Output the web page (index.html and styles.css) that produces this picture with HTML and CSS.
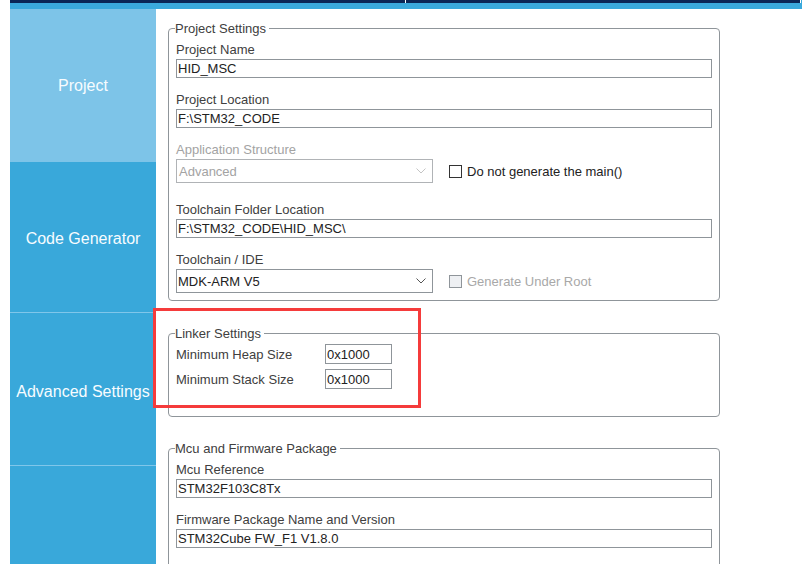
FILE: index.html
```html
<!DOCTYPE html>
<html lang="en">
<head>
<meta charset="utf-8">
<title>Project Manager</title>
<link rel="stylesheet" href="styles.css">
</head>
<body>
<div class="topbar">
  <div class="tabs"><div class="tab tab-1"></div><div class="tab tab-2"></div></div>
  <div class="band"></div>
</div>
<div class="layout">
  <nav class="sidebar">
    <div class="nav-item active">Project</div>
    <div class="nav-item code">Code Generator</div>
    <div class="nav-item sep adv">Advanced Settings</div>
    <div class="nav-item sep rest"></div>
  </nav>
  <main class="main">
    <fieldset class="group">
      <legend>Project Settings</legend>
      <div class="fields">
        <div class="field">
          <div class="label">Project Name</div>
          <input class="text" type="text" value="HID_MSC">
        </div>
        <div class="field">
          <div class="label">Project Location</div>
          <input class="text" type="text" value="F:\STM32_CODE">
        </div>
        <div class="field">
          <div class="label disabled">Application Structure</div>
          <div class="select-row">
            <div class="select is-disabled"><span>Advanced</span>
              <svg class="chev" width="10" height="6" viewBox="0 0 10 6"><polyline points="0.5,0.5 5,5 9.5,0.5" fill="none" stroke="#c4c4c4" stroke-width="1"/></svg>
            </div>
            <label class="check"><span class="box"></span><span>Do not generate the main()</span></label>
          </div>
        </div>
        <div class="field">
          <div class="label">Toolchain Folder Location</div>
          <input class="text" type="text" value="F:\STM32_CODE\HID_MSC\">
        </div>
        <div class="field">
          <div class="label">Toolchain / IDE</div>
          <div class="select-row">
            <div class="select"><span>MDK-ARM V5</span>
              <svg class="chev" width="10" height="6" viewBox="0 0 10 6"><polyline points="0.5,0.5 5,5 9.5,0.5" fill="none" stroke="#555" stroke-width="1"/></svg>
            </div>
            <label class="check is-disabled"><span class="box"></span><span>Generate Under Root</span></label>
          </div>
        </div>
      </div>
    </fieldset>

    <fieldset class="group linker">
      <legend>Linker Settings</legend>
      <div class="grid">
        <div class="label">Minimum Heap Size</div>
        <input class="text small" type="text" value="0x1000">
        <div class="label">Minimum Stack Size</div>
        <input class="text small" type="text" value="0x1000">
      </div>
    </fieldset>

    <fieldset class="group mcu">
      <legend>Mcu and Firmware Package</legend>
      <div class="fields">
        <div class="field">
          <div class="label">Mcu Reference</div>
          <input class="text" type="text" value="STM32F103C8Tx">
        </div>
        <div class="field">
          <div class="label">Firmware Package Name and Version</div>
          <input class="text" type="text" value="STM32Cube FW_F1 V1.8.0">
        </div>
      </div>
    </fieldset>
  </main>
  <div class="highlight"></div>
</div>
</body>
</html>
```

FILE: styles.css
```css
* { box-sizing: border-box; }

html, body {
  margin: 0;
  padding: 0;
  background: #ffffff;
  height: 564px;
  overflow: hidden;
  font-family: "Liberation Sans", Arial, sans-serif;
  font-size: 13px;
  color: #404040;
}

.topbar {
  margin-left: 10px;
}
.tabs {
  display: flex;
  height: 3px;
  background: #3aa9dc;
}
.tab {
  background: #0a2656;
  border-right: 1px solid #ffffff;
}
.tab-1 { width: 396px; }
.tab-2 { width: 395px; }
.band {
  height: 6px;
  background: #3aa9dc;
}

.layout {
  position: relative;
  display: flex;
  margin-left: 10px;
  height: 555px;
}

.sidebar {
  width: 146px;
  flex: none;
  display: flex;
  flex-direction: column;
}
.nav-item {
  display: flex;
  align-items: center;
  justify-content: center;
  height: 150px;
  background: #39a8da;
  color: #f7fcff;
  font-size: 16px;
}
.nav-item.active {
  height: 153px;
  background: #7dc4e8;
}
.nav-item.code {
  padding-top: 4px;
}
.nav-item.sep {
  border-top: 1px solid #80c6ea;
}
.nav-item.adv {
  height: 153px;
  padding-top: 5px;
}
.nav-item.rest {
  flex: 1;
}

.main {
  flex: none;
  padding: 11px 0 0 12px;
}

.group {
  margin: 0;
  width: 552px;
  min-width: 0;
  border: 1px solid #8f959a;
  border-radius: 4px;
  padding: 0 7px 2px 7px;
}
.group legend {
  padding: 1px 3px 0 0;
  margin-left: -1px;
  line-height: 16px;
  font-size: 13px;
  color: #404040;
}

.fields {
  display: flex;
  flex-direction: column;
  gap: 13px;
  padding-top: 4px;
}
.field {
  display: flex;
  flex-direction: column;
}
.label {
  line-height: 16px;
  height: 16px;
  padding-top: 1px;
  margin-bottom: 2px;
  color: #404040;
  white-space: nowrap;
}
.label.disabled {
  color: #a3a3a3;
}

.text {
  display: block;
  width: 536px;
  height: 19px;
  margin: 0;
  border: 1px solid #8f959a;
  border-radius: 0;
  padding: 0 1px;
  font-family: "Liberation Sans", Arial, sans-serif;
  font-size: 13px;
  color: #222222;
  background: #ffffff;
  outline: none;
}

.select-row {
  display: flex;
  align-items: flex-start;
  min-height: 29px;
}
.select {
  width: 257px;
  height: 24px;
  border: 1px solid #8f959a;
  display: flex;
  align-items: center;
  justify-content: space-between;
  padding: 0 6px 0 1px;
  color: #222222;
  background: #ffffff;
}
.select.is-disabled {
  border-color: #b0b3b6;
  color: #a3a3a3;
  padding-left: 2px;
}
.chev { display: block; }

.check {
  display: flex;
  align-items: center;
  gap: 5px;
  height: 24px;
  margin-left: 16px;
  color: #222222;
}
.check .box {
  width: 13px;
  height: 13px;
  border: 1px solid #333333;
  background: #ffffff;
}
.check.is-disabled { color: #a8a8a8; }
.check.is-disabled .box {
  border-color: #8f959a;
  background: #eef0f3;
}

.linker {
  margin-top: 24px;
  padding-bottom: 27px;
}
.grid {
  display: grid;
  grid-template-columns: 149px 67px;
  row-gap: 5px;
  padding-top: 2px;
}
.grid .label {
  height: 20px;
  line-height: 20px;
  padding-top: 1px;
  margin: 0;
}
.text.small {
  width: 67px;
  height: 20px;
}

.mcu {
  margin-top: 23px;
  padding-bottom: 40px;
}

.highlight {
  position: absolute;
  left: 143px;
  top: 299px;
  width: 268px;
  height: 100px;
  border: 3px solid #f53b3b;
  pointer-events: none;
}
```
